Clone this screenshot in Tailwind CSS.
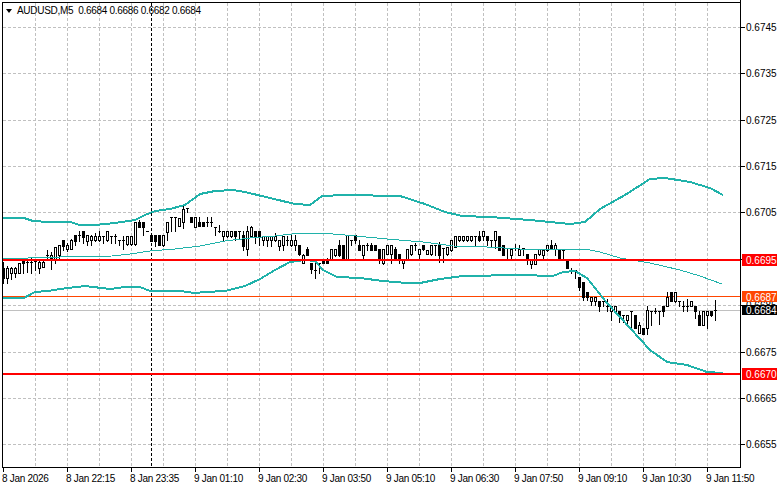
<!DOCTYPE html>
<html lang="en">
<head>
    <meta charset="UTF-8">
    <title>AUDUSD,M5</title>
    <script src="https://cdn.jsdelivr.net/npm/@tailwindcss/browser@4"></script>
</head>
<body class="bg-white">

    <div class="relative w-[781px] h-[489px] overflow-hidden bg-white text-black text-[10px] leading-[13px] font-['Liberation_Sans',sans-serif]">

        <!-- Chart canvas, filled in by the script below -->
        <svg id="chart" class="absolute inset-0" width="781" height="489" shape-rendering="crispEdges"></svg>

        <!-- Legend -->
        <div class="absolute left-[6px] top-[4px] flex items-center gap-[5px] whitespace-pre tracking-[-0.3px]">
            <span class="w-0 h-0 border-x-[3.5px] border-x-transparent border-t-[4px] border-t-black"></span>
            <span>AUDUSD,M5  0.6684 0.6686 0.6682 0.6684</span>
        </div>

        <!-- Price axis -->
        <span class="absolute left-[746px] top-[21px]">0.6745</span>
        <span class="absolute left-[746px] top-[67px]">0.6735</span>
        <span class="absolute left-[746px] top-[114px]">0.6725</span>
        <span class="absolute left-[746px] top-[160px]">0.6715</span>
        <span class="absolute left-[746px] top-[206px]">0.6705</span>
        <span class="absolute left-[746px] top-[299px]">0.6685</span>
        <span class="absolute left-[746px] top-[346px]">0.6675</span>
        <span class="absolute left-[746px] top-[392px]">0.6665</span>
        <span class="absolute left-[746px] top-[438px]">0.6655</span>

        <!-- Price tags -->
        <span class="absolute left-[742px] top-[254px] w-[35px] h-[12px] pl-[4px] bg-[#ff0000] text-white">0.6695</span>
        <span class="absolute left-[742px] top-[291px] w-[35px] h-[11px] pl-[4px] bg-[#ff4500] text-white">0.6687</span>
        <span class="absolute left-[742px] top-[305px] w-[35px] h-[10px] pl-[4px] bg-black text-white leading-[11px]">0.6684</span>
        <span class="absolute left-[742px] top-[368px] w-[35px] h-[12px] pl-[4px] bg-[#ff0000] text-white">0.6670</span>

        <!-- Time axis -->
        <div class="absolute left-[2px] top-[472px] grid grid-cols-[repeat(12,64px)] whitespace-nowrap tracking-[-0.3px]">
            <span>8 Jan 2026</span>
            <span>8 Jan 22:15</span>
            <span>8 Jan 23:35</span>
            <span>9 Jan 01:10</span>
            <span>9 Jan 02:30</span>
            <span>9 Jan 03:50</span>
            <span>9 Jan 05:10</span>
            <span>9 Jan 06:30</span>
            <span>9 Jan 07:50</span>
            <span>9 Jan 09:10</span>
            <span>9 Jan 10:30</span>
            <span>9 Jan 11:50</span>
        </div>
    </div>

    <script>
        const svg = document.getElementById('chart');
        const TEAL = '#20b2aa';
        const GRID = '#c0c0c0';

        function add(tag, attrs) {
            const el = document.createElementNS('http://www.w3.org/2000/svg', tag);
            for (const k in attrs) el.setAttribute(k, attrs[k]);
            svg.appendChild(el);
        }
        function rect(x, y, w, h, fill) {
            add('rect', { x, y, width: w, height: h, fill });
        }
        function hline(y, x1, x2, stroke, width, dash) {
            add('line', { x1, x2, y1: y + 0.5, y2: y + 0.5, stroke, 'stroke-width': width, 'stroke-dasharray': dash || 'none' });
        }
        function vline(x, y1, y2, stroke, dash) {
            add('line', { x1: x + 0.5, x2: x + 0.5, y1, y2, stroke, 'stroke-width': 1, 'stroke-dasharray': dash || 'none' });
        }
        function band(points, width) {
            add('polyline', { points: points.map(p => p.join(',')).join(' '), fill: 'none', stroke: TEAL, 'stroke-width': width, 'stroke-linejoin': 'round' });
        }

        // Grid
        [27, 73, 120, 166, 212, 259, 305, 352, 398, 444].forEach(y => {
            hline(y, 3, 740, GRID, 1, '3 2');
            rect(740, y, 5, 1, '#000');
        });
        for (let x = 35; x <= 707; x += 32) vline(x, 3, 467, GRID, '3 2');

        hline(310, 3, 740, GRID, 1);
        hline(296, 3, 740, '#ff4500', 1);

        // Period separator
        vline(151, 3, 467, '#000', '3 2');

        // Candles: body top, body bottom, high, low, 1 = bearish (filled)
        const candles = `268 278 262 283 1,268 278 266 283 0,268 273 267 279 0,268 273 267 277 0,263 273 263 273 0,
261 263 261 273 1,262 262 260 272 0,262 262 258 273 0,261 261 259 270 0,262 268 261 273 0,262 267 261 267 0,
255 255 250 259 0,255 258 252 269 0,247 259 247 263 0,245 255 245 258 0,240 246 240 250 1,245 249 243 251 0,
240 249 239 249 0,235 241 235 245 1,235 235 231 241 0,231 237 231 243 1,235 241 235 245 0,236 240 235 245 0,
236 240 233 241 0,236 240 231 241 0,236 236 236 243 0,231 240 231 241 0,236 236 236 243 0,236 236 234 243 0,
240 240 240 245 0,240 240 236 249 0,236 244 236 245 0,236 244 236 245 0,222 244 222 245 0,222 227 220 227 1,
222 227 222 235 1,231 231 231 231 0,235 241 235 241 1,235 241 235 246 1,235 245 235 245 1,235 245 235 246 0,
222 232 222 240 0,217 217 217 231 0,217 217 217 231 0,218 226 218 226 0,209 222 205 228 0,208 208 208 212 0,
217 222 217 222 1,217 227 217 227 0,222 226 217 226 1,222 226 222 226 1,222 222 217 226 0,222 222 217 226 0,
227 227 227 235 0,231 231 225 232 0,231 236 231 241 0,231 236 231 237 0,231 236 231 237 0,231 236 231 240 1,
231 231 231 239 0,235 246 231 250 1,231 249 226 255 0,227 236 226 236 0,231 236 231 243 1,231 237 231 245 1,
236 240 236 245 0,236 240 236 246 0,236 240 236 246 0,236 240 233 241 0,240 246 240 250 0,236 245 236 250 0,
240 240 236 245 0,240 245 235 246 0,240 245 235 250 0,245 254 245 255 1,255 263 254 263 0,249 255 247 255 1,
263 269 263 273 1,270 270 263 278 0,263 263 263 273 0,260 263 260 263 1,260 263 258 263 1,249 260 249 260 0,
249 255 249 256 0,245 255 240 256 1,245 260 245 260 1,235 260 235 260 0,240 240 240 245 0,235 240 235 243 1,
245 250 240 250 1,245 255 245 258 0,245 245 243 250 0,245 250 243 250 1,245 250 245 250 1,249 260 249 263 1,
249 263 249 264 0,245 254 245 254 0,245 254 245 263 0,249 259 247 260 1,254 259 254 263 1,260 263 260 268 0,
249 259 249 260 0,245 254 245 255 0,245 245 243 250 0,249 254 249 260 0,245 249 245 250 1,250 254 250 254 0,
245 254 245 255 0,245 245 245 255 0,245 255 242 262 1,248 248 248 262 0,247 254 247 255 0,240 250 240 251 0,
236 247 236 247 0,236 240 236 241 0,236 240 236 241 0,236 240 236 241 0,236 240 236 241 0,
236 236 236 245 0,236 240 231 241 1,231 236 231 240 0,236 240 236 245 1,240 240 240 247 0,
231 240 231 248 0,236 250 236 250 1,245 255 245 255 1,248 248 248 258 0,249 255 249 260 0,248 248 244 250 0,
249 255 245 255 0,248 248 248 255 0,254 259 254 264 1,259 264 259 268 0,254 264 254 264 0,249 254 249 255 0,
250 255 250 258 0,245 250 245 251 0,245 249 240 249 1,245 249 243 255 0,249 258 249 258 1,250 250 250 258 0,
261 268 261 268 1,270 270 268 273 0,270 270 270 278 0,277 287 277 290 1,282 297 282 300 1,292 297 292 300 1,
297 301 297 305 0,297 301 297 305 0,301 306 301 311 1,301 301 301 306 0,306 306 299 311 0,306 311 306 320 0,
306 311 306 312 0,311 315 311 322 1,315 315 315 322 0,315 320 315 325 0,311 311 311 330 0,315 328 315 328 1,
325 333 322 333 0,328 334 328 334 1,310 328 306 334 0,311 311 311 325 0,311 311 308 313 0,311 311 311 324 0,
306 311 306 316 1,297 306 292 306 0,292 301 292 301 1,292 301 292 302 0,301 301 301 306 0,306 306 301 311 0,
306 306 299 311 0,301 306 301 306 0,306 311 306 318 1,315 325 311 325 1,311 325 311 325 0,311 315 311 328 0,
311 315 311 316 1,310 310 300 320 0`;

        candles.split(',').forEach((c, i) => {
            const [t, b, h, l, bear] = c.trim().split(' ').map(Number);
            const x = 3 + i * 4;
            rect(x, h, 1, l - h + 1, '#000');
            rect(x - 1, t, 3, b - t + 1, '#000');
            if (!bear && b - t > 1) rect(x, t + 1, 1, b - t - 1, '#fff');
        });

        // Bollinger bands
        band([[3,218],[24,218],[33,221],[48,222],[70,222],[80,225],[95,225],[115,223],[135,220],[145,215],[155,211],[170,209],[185,205],[200,194],[215,191],[233,190],[245,192],[270,198],[295,204],[310,205],[322,196],[345,195],[400,196],[425,204],[445,212],[462,216],[490,217],[530,220],[570,224],[585,222],[600,209],[625,195],[650,179],[665,178],[690,182],[710,188],[723,195]], 2);
        band([[3,259],[28,258],[60,257],[112,256],[130,254],[150,251],[175,249],[200,246],[225,241],[250,238],[275,236],[300,233],[320,233],[345,235],[387,239],[423,242],[453,246],[487,247],[520,249],[540,250],[565,249],[585,249],[600,252],[620,258],[650,263],[680,270],[700,276],[722,284]], 1);
        band([[3,298],[24,298],[35,292],[48,291],[60,289],[85,286],[110,289],[125,287],[140,287],[150,291],[180,291],[195,293],[205,292],[225,291],[245,286],[260,279],[275,270],[290,262],[305,260],[315,261],[323,270],[337,277],[360,278],[383,281],[407,283],[420,283],[440,279],[463,276],[520,275],[553,276],[563,272],[575,271],[587,278],[607,303],[620,317],[650,350],[667,362],[687,365],[707,372],[723,373]], 2);

        // Horizontal levels
        rect(3, 259, 737, 2, '#ff0000');
        rect(3, 373, 737, 2, '#ff0000');

        // Frame and time ticks
        rect(2, 2, 738, 1, '#000');
        rect(2, 2, 1, 466, '#000');
        rect(740, 0, 1, 468, '#000');
        rect(2, 467, 739, 1, '#000');
        for (let x = 3; x <= 707; x += 64) rect(x, 468, 1, 4, '#000');
    </script>

</body>
</html>
